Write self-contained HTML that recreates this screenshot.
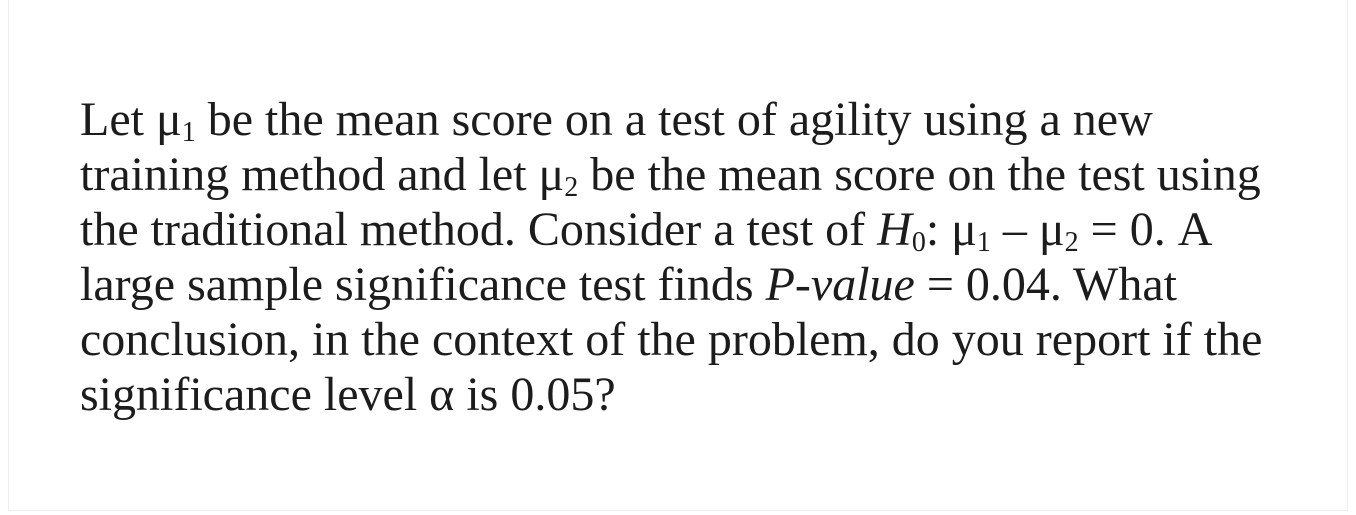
<!DOCTYPE html>
<html><head><meta charset="utf-8"><style>
html,body{margin:0;padding:0;background:#fff;}
body{width:1356px;height:515px;position:relative;overflow:hidden;}
.frame{position:absolute;left:8px;top:0;right:8px;bottom:4px;border:1px solid #eee;border-top:none;}
.t{position:absolute;left:80px;top:92px;font-family:"Liberation Serif",serif;font-size:48px;line-height:55px;color:#1c1c1c;white-space:nowrap;}
sub{font-size:28px;vertical-align:-6px;line-height:0;}
i{font-style:italic;}
</style></head><body>
<div class="frame"></div>
<div class="t">
<div>Let μ<sub>1</sub> be the mean score on a test of agility using a new</div>
<div>training method and let μ<sub>2</sub> be the mean score on the test using</div>
<div>the traditional method. Consider a test of <i>H</i><sub>0</sub>: μ<sub>1</sub> – μ<sub>2</sub> = 0. A</div>
<div>large sample significance test finds <i>P-value</i> = 0.04. What</div>
<div>conclusion, in the context of the problem, do you report if the</div>
<div>significance level α is 0.05?</div>
</div>
</body></html>
